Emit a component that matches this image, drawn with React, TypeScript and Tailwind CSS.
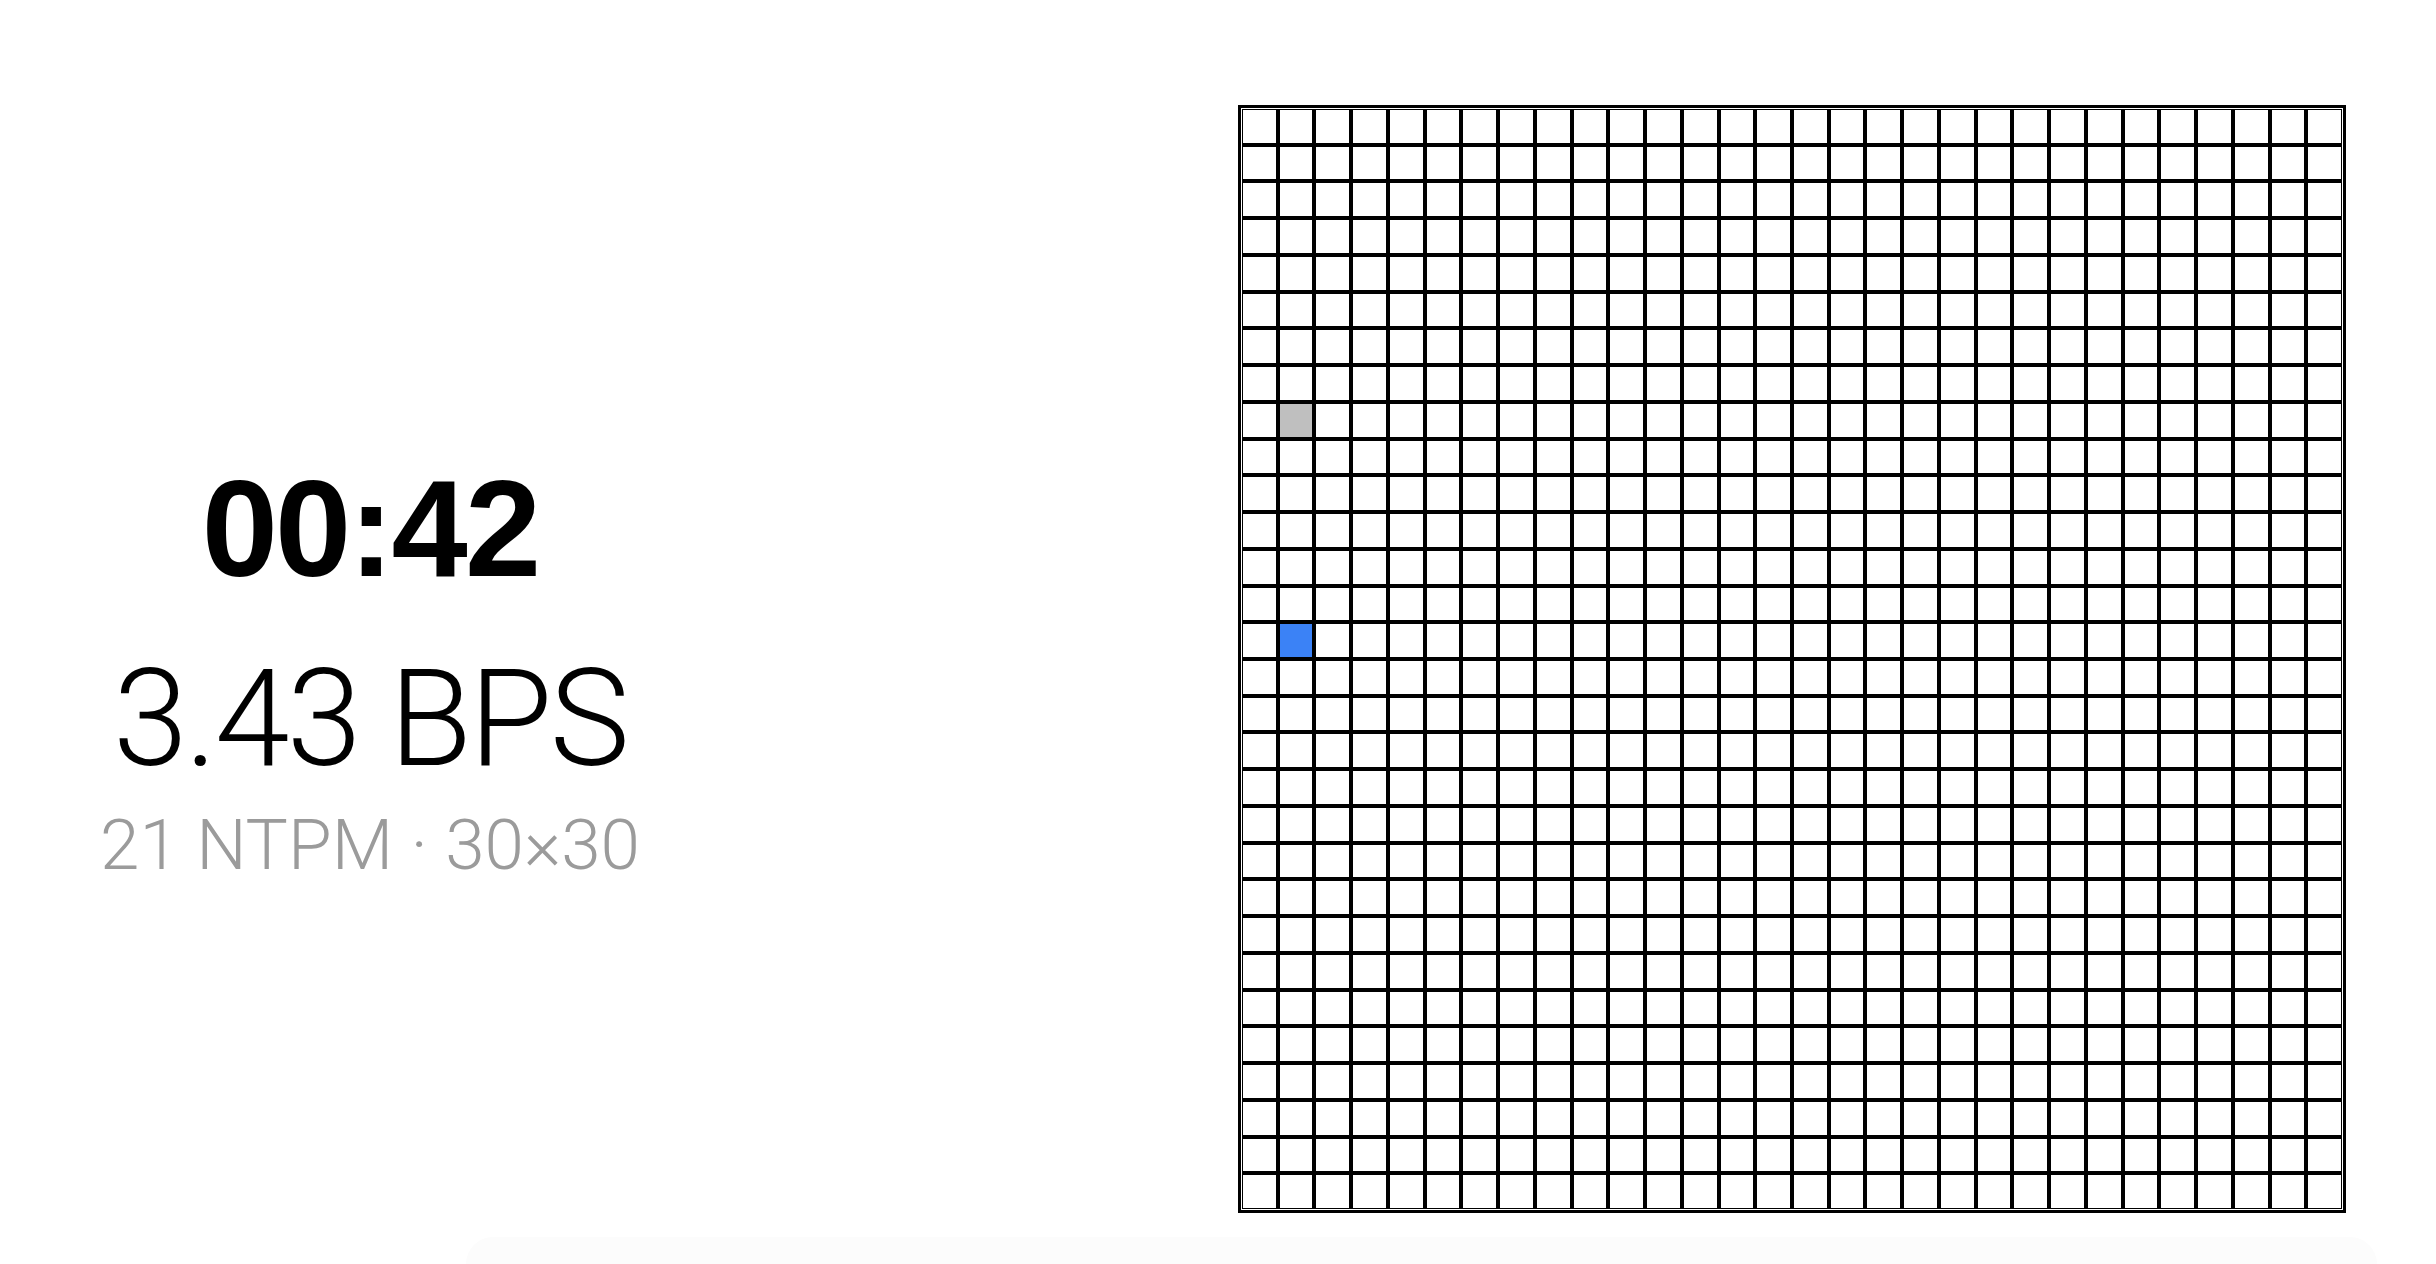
const SIZE = 30;

const marks: Record<string, string> = {
  "8-1": "bg-[#bfbfbf]",
  "14-1": "bg-[#3b82f6]",
};

function Board() {
  const cells = [];
  for (let r = 0; r < SIZE; r++) {
    for (let c = 0; c < SIZE; c++) {
      const mark = marks[`${r}-${c}`];
      cells.push(<div key={`${r}-${c}`} className={mark ? mark : "bg-white"} />);
    }
  }
  return (
    <div className="w-[1108px] h-[1108px] shrink-0 border-[3px] border-black bg-white p-px">
      <div className="w-full h-full grid grid-cols-[repeat(30,minmax(0,1fr))] grid-rows-[repeat(30,minmax(0,1fr))] gap-[4px] bg-black border border-black">
        {cells}
      </div>
    </div>
  );
}

export default function App() {
  return (
    <div className="w-full h-[1264px] overflow-hidden bg-white flex flex-col font-['Roboto',sans-serif]">
      <div className="flex items-start pt-[105px] pr-[90px]">
        <div className="w-[740px] flex flex-col items-center pt-[355px]">
          <p className="text-[137px] leading-none font-bold tracking-[-0.02em] text-black font-['Liberation_Sans',Arial,sans-serif]">
            00:42
          </p>
          <p className="mt-[55px] text-[135px] leading-none font-light tracking-[-0.02em] text-black">
            3.43 BPS
          </p>
          <p className="mt-[22px] text-[71px] leading-none font-light text-[#9b9b9b]">
            21 NTPM · 30×30
          </p>
        </div>
        <div className="ml-auto">
          <Board />
        </div>
      </div>
      <div className="mt-[24px] ml-[466px] mr-[59px] h-[80px] rounded-t-[40px] bg-[#fcfcfc]" />
    </div>
  );
}
